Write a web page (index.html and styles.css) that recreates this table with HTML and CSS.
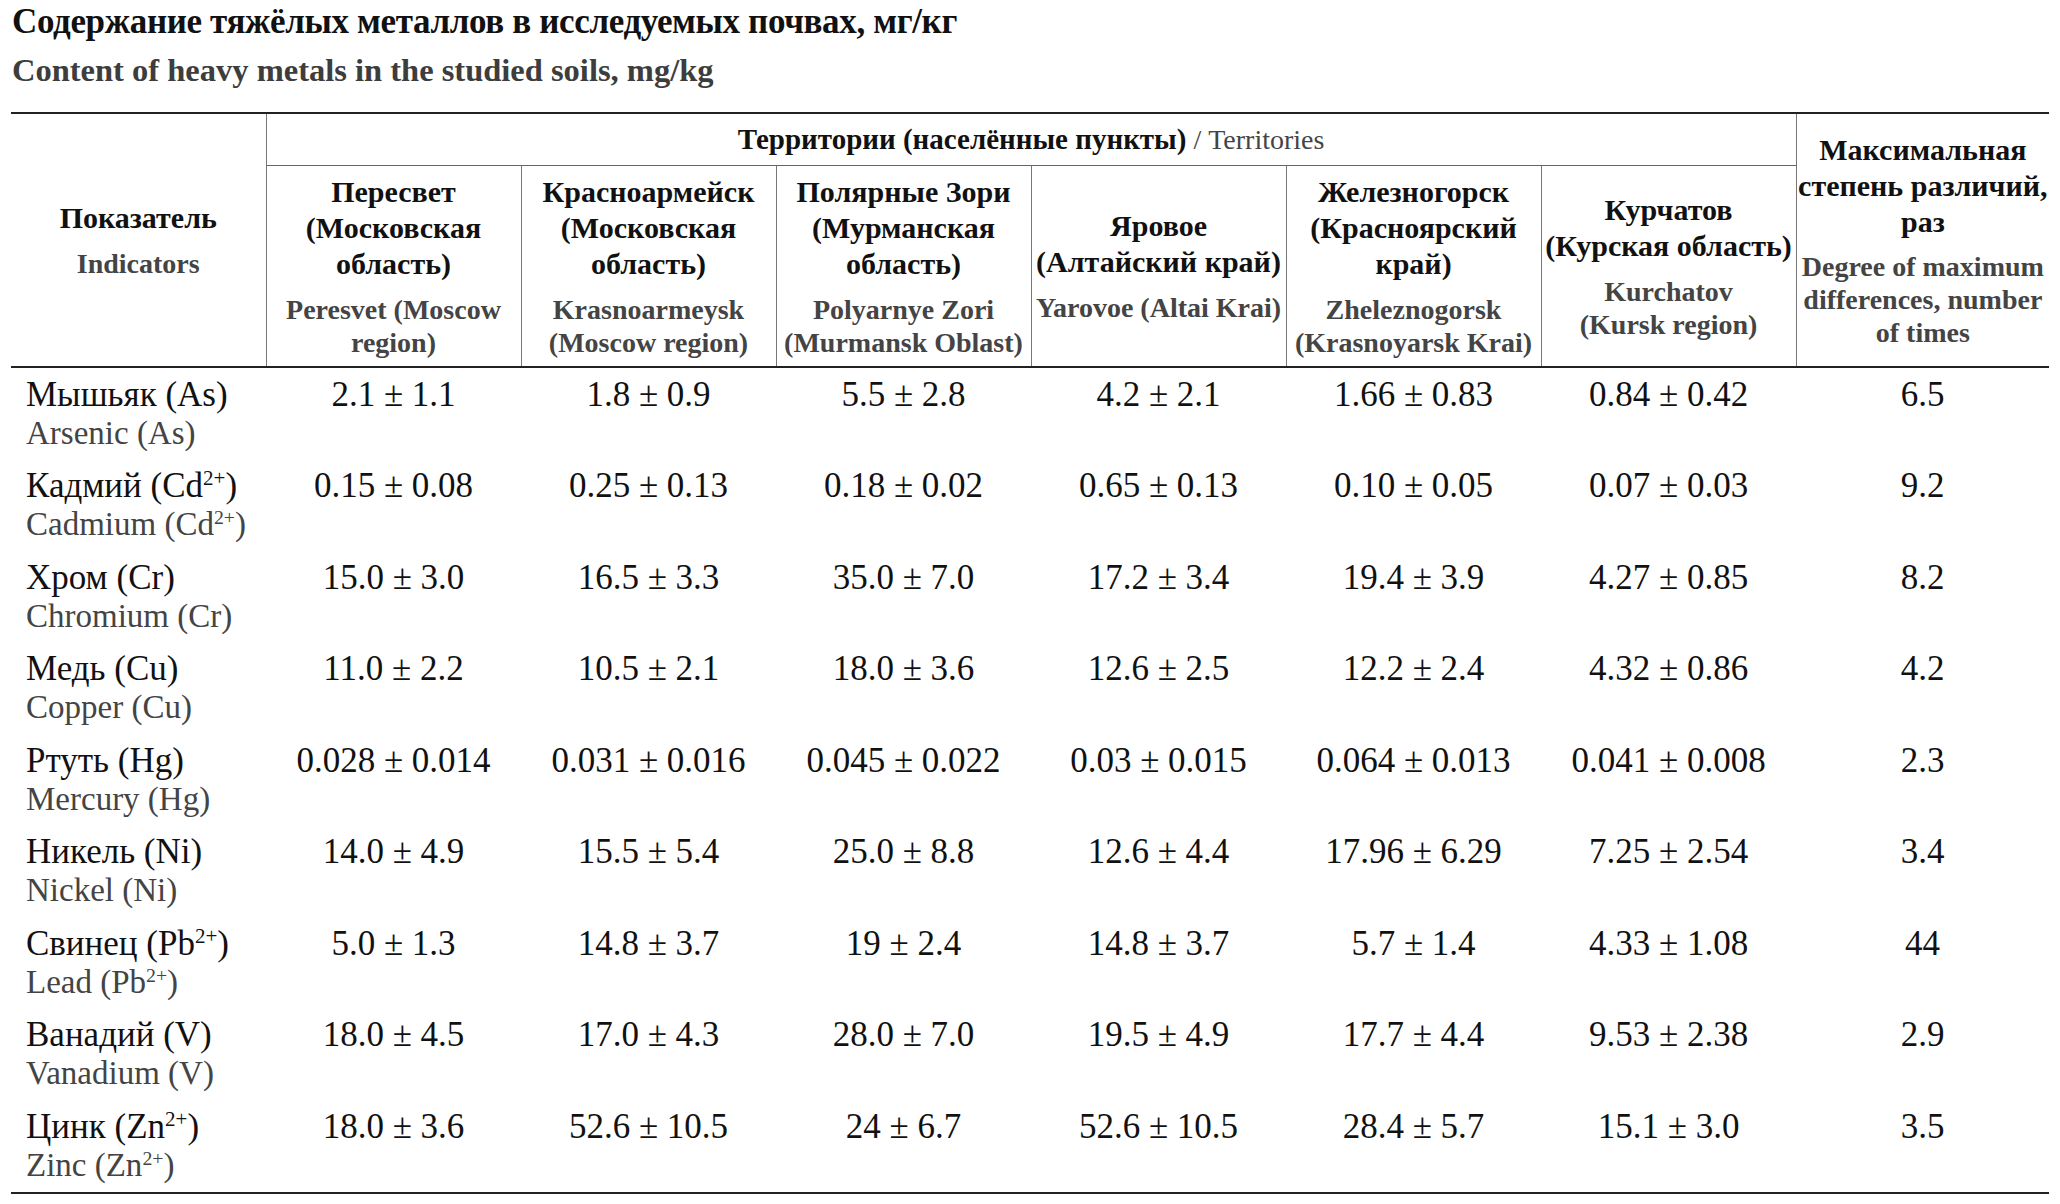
FILE: index.html
```html
<!DOCTYPE html>
<html lang="ru">
<head>
<meta charset="utf-8">
<title>Содержание тяжёлых металлов</title>
<link rel="stylesheet" href="styles.css">
</head>
<body>
<div class="page">
  <h1 class="title">Содержание тяжёлых металлов в исследуемых почвах, мг/кг</h1>
  <h2 class="subtitle">Content of heavy metals in the studied soils, mg/kg</h2>
  <table class="data">
    <colgroup>
      <col class="c-ind"><col class="c-t"><col class="c-t"><col class="c-t"><col class="c-t"><col class="c-t"><col class="c-t"><col class="c-max">
    </colgroup>
    <thead>
      <tr class="h1">
        <th rowspan="2" class="hind"><div class="ru">Показатель</div><div class="en en-tight">Indicators</div></th>
        <th colspan="6" class="hterr"><span class="ru-in">Территории (населённые пункты)</span> <span class="en-in">/ Territories</span></th>
        <th rowspan="2" class="hmax"><div class="ru">Максимальная<br>степень различий,<br>раз</div><div class="en en-max">Degree of maximum<br>differences, number<br>of times</div></th>
      </tr>
      <tr class="h2">
        <th><div class="ru">Пересвет<br>(Московская<br>область)</div><div class="en">Peresvet (Moscow<br>region)</div></th>
        <th><div class="ru">Красноармейск<br>(Московская<br>область)</div><div class="en">Krasnoarmeysk<br>(Moscow region)</div></th>
        <th><div class="ru">Полярные Зори<br>(Мурманская<br>область)</div><div class="en">Polyarnye Zori<br>(Murmansk Oblast)</div></th>
        <th><div class="ru">Яровое<br>(Алтайский край)</div><div class="en">Yarovoe (Altai Krai)</div></th>
        <th><div class="ru">Железногорск<br>(Красноярский<br>край)</div><div class="en">Zheleznogorsk<br>(Krasnoyarsk Krai)</div></th>
        <th><div class="ru">Курчатов<br>(Курская область)</div><div class="en">Kurchatov<br>(Kursk region)</div></th>
      </tr>
    </thead>
    <tbody>
      <tr><td class="ind"><div class="ru">Мышьяк (As)</div><div class="en">Arsenic (As)</div></td><td>2.1 ± 1.1</td><td>1.8 ± 0.9</td><td>5.5 ± 2.8</td><td>4.2 ± 2.1</td><td>1.66 ± 0.83</td><td>0.84 ± 0.42</td><td>6.5</td></tr>
      <tr><td class="ind"><div class="ru">Кадмий (Cd<sup>2+</sup>)</div><div class="en">Cadmium (Cd<sup>2+</sup>)</div></td><td>0.15 ± 0.08</td><td>0.25 ± 0.13</td><td>0.18 ± 0.02</td><td>0.65 ± 0.13</td><td>0.10 ± 0.05</td><td>0.07 ± 0.03</td><td>9.2</td></tr>
      <tr><td class="ind"><div class="ru">Хром (Cr)</div><div class="en">Chromium (Cr)</div></td><td>15.0 ± 3.0</td><td>16.5 ± 3.3</td><td>35.0 ± 7.0</td><td>17.2 ± 3.4</td><td>19.4 ± 3.9</td><td>4.27 ± 0.85</td><td>8.2</td></tr>
      <tr><td class="ind"><div class="ru">Медь (Cu)</div><div class="en">Copper (Cu)</div></td><td>11.0 ± 2.2</td><td>10.5 ± 2.1</td><td>18.0 ± 3.6</td><td>12.6 ± 2.5</td><td>12.2 ± 2.4</td><td>4.32 ± 0.86</td><td>4.2</td></tr>
      <tr><td class="ind"><div class="ru">Ртуть (Hg)</div><div class="en">Mercury (Hg)</div></td><td>0.028 ± 0.014</td><td>0.031 ± 0.016</td><td>0.045 ± 0.022</td><td>0.03 ± 0.015</td><td>0.064 ± 0.013</td><td>0.041 ± 0.008</td><td>2.3</td></tr>
      <tr><td class="ind"><div class="ru">Никель (Ni)</div><div class="en">Nickel (Ni)</div></td><td>14.0 ± 4.9</td><td>15.5 ± 5.4</td><td>25.0 ± 8.8</td><td>12.6 ± 4.4</td><td>17.96 ± 6.29</td><td>7.25 ± 2.54</td><td>3.4</td></tr>
      <tr><td class="ind"><div class="ru">Свинец (Pb<sup>2+</sup>)</div><div class="en">Lead (Pb<sup>2+</sup>)</div></td><td>5.0 ± 1.3</td><td>14.8 ± 3.7</td><td>19 ± 2.4</td><td>14.8 ± 3.7</td><td>5.7 ± 1.4</td><td>4.33 ± 1.08</td><td>44</td></tr>
      <tr><td class="ind"><div class="ru">Ванадий (V)</div><div class="en">Vanadium (V)</div></td><td>18.0 ± 4.5</td><td>17.0 ± 4.3</td><td>28.0 ± 7.0</td><td>19.5 ± 4.9</td><td>17.7 ± 4.4</td><td>9.53 ± 2.38</td><td>2.9</td></tr>
      <tr><td class="ind"><div class="ru">Цинк (Zn<sup>2+</sup>)</div><div class="en">Zinc (Zn<sup>2+</sup>)</div></td><td>18.0 ± 3.6</td><td>52.6 ± 10.5</td><td>24 ± 6.7</td><td>52.6 ± 10.5</td><td>28.4 ± 5.7</td><td>15.1 ± 3.0</td><td>3.5</td></tr>
    </tbody>
  </table>
</div>
</body>
</html>
```

FILE: styles.css
```css
html, body {
  margin: 0;
  padding: 0;
  background: #ffffff;
}

.page {
  font-family: "Liberation Serif", "Times New Roman", serif;
  color: #111111;
  padding: 2px 0 0 11px;
}

.title {
  margin: 0 0 0 1px;
  font-size: 35px;
  line-height: 40px;
  letter-spacing: -0.35px;
  font-weight: bold;
  color: #111111;
}

.subtitle {
  margin: 8px 0 22px 1px;
  font-size: 32.5px;
  line-height: 40px;
  letter-spacing: 0;
  font-weight: bold;
  color: #3d3d3d;
}

.data {
  width: 2038px;
  border-collapse: collapse;
  table-layout: fixed;
  border-top: 2px solid #222222;
  border-bottom: 2px solid #222222;
}

.c-ind { width: 255px; }
.c-t { width: 255px; }
.c-max { width: 253px; }

thead th {
  padding: 0;
  text-align: center;
  vertical-align: middle;
  font-weight: bold;
}

thead .ru {
  font-size: 30px;
  line-height: 36px;
  color: #111111;
}

thead .en {
  margin-top: 11px;
  font-size: 28px;
  line-height: 33px;
  color: #444444;
}

thead .en-tight { margin-top: 11px; }
thead .en-max { margin-top: 10px; }

.h1 .hterr {
  height: 51px;
  font-size: 28px;
  border-left: 1px solid #777777;
  border-right: 1px solid #777777;
  border-bottom: 1px solid #666666;
}

.hterr .ru-in {
  font-size: 29px;
  color: #111111;
}

.hterr .en-in {
  font-weight: normal;
  color: #444444;
}

.hind {
  border-right: 1px solid #777777;
  border-bottom: 2px solid #222222;
}

.hmax {
  border-left: 1px solid #777777;
  border-bottom: 2px solid #222222;
}

.h2 th {
  height: 200px;
  border-left: 1px solid #777777;
  border-bottom: 2px solid #222222;
}

.h2 th:last-child { border-right: 1px solid #777777; }

tbody td {
  padding: 6.5px 0 7px;
  vertical-align: top;
  text-align: center;
  font-size: 35px;
  line-height: 39px;
  color: #111111;
}

tbody td.ind {
  text-align: left;
  padding-left: 15px;
}

tbody .ind .en {
  color: #444444;
  font-size: 33px;
}

sup {
  font-size: 0.6em;
  line-height: 0;
  vertical-align: 0.55em;
}
```
